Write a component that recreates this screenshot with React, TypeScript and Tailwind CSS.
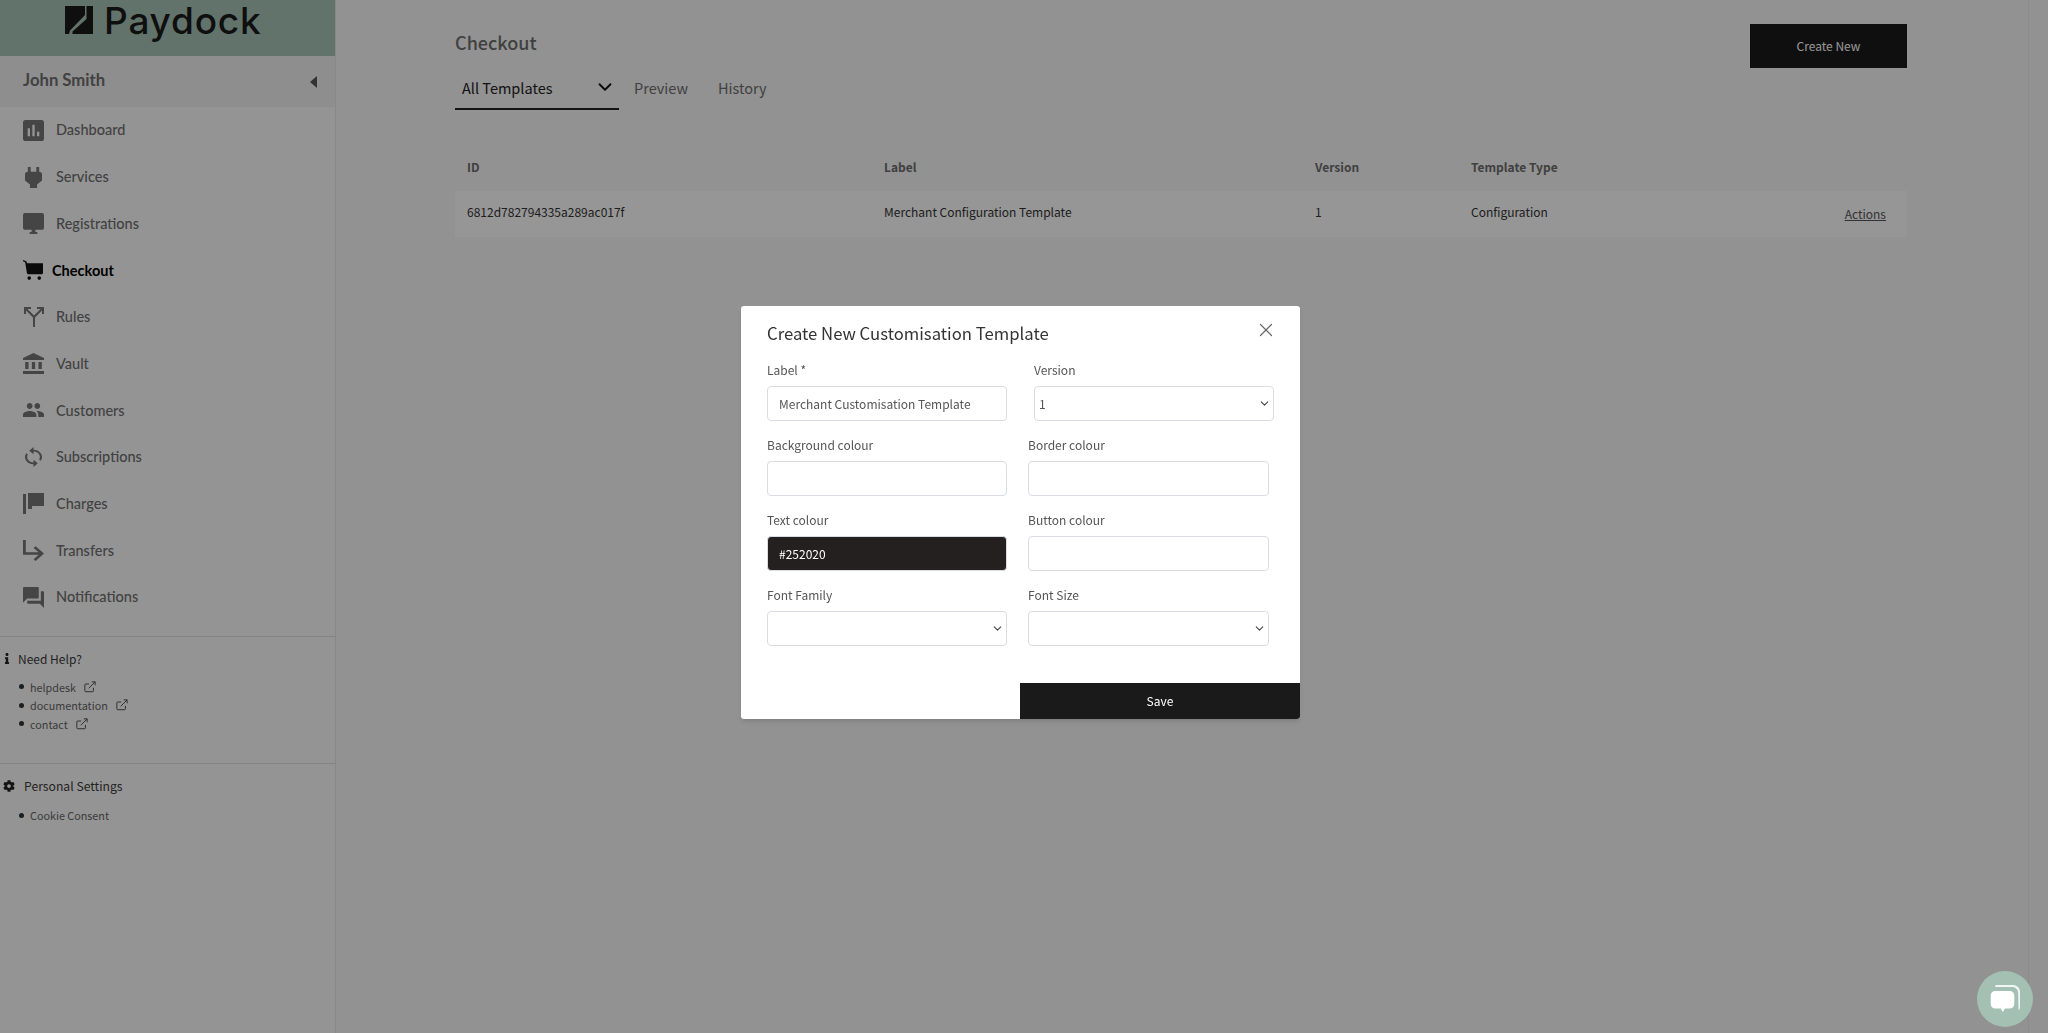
import { X, ChevronDown } from "lucide-react";
import { FaCog, FaInfo } from "react-icons/fa";

// ─── Icons ──────────────────────────────────────────────────

function Glyph({ d, box, className }: { d: string; box: string; className?: string }) {
  return (
    <svg viewBox={box} className={className} fill="currentColor" preserveAspectRatio="none">
      <path d={d} />
    </svg>
  );
}

function Logo() {
  return (
    <div className="flex h-14 items-start bg-[#a6c3b5] pl-[65px]">
      <svg viewBox="0 0 28 28" className="mt-[6px] mr-[11px] h-[28px] w-[28px]" fill="#1a1a1a">
        <path d="M0 0h20v9L5 24.500 4 28H0zM28 0v28H7.500v-2.500L21.500 13V0z" />
      </svg>
      <span className="pt-[1px] font-['Inter',sans-serif] text-[37px] leading-[40px] font-medium tracking-[0.8px] text-[#1a1a1a]">
        Paydock
      </span>
    </div>
  );
}

function ExternalIcon() {
  return (
    <svg viewBox="0 0 14 14" className="ml-[8px] h-[12px] w-[12px] text-[#4a4a4a]" fill="none" stroke="currentColor" strokeWidth="1.1">
      <path d="M11 8v3.500a1 1 0 0 1-1 1H2a1 1 0 0 1-1-1V4.500a1 1 0 0 1 1-1h4" />
      <path d="M5.500 8.500L13 1M9 1h4v4" />
    </svg>
  );
}

// ─── Data ───────────────────────────────────────────────────

const NAV = [
  { label: "Dashboard", box: "3 3 18 18", w: "w-[21px]", h: "h-[21px]", d: "M19 3H5c-1.100 0-2 .9-2 2v14c0 1.100.9 2 2 2h14c1.100 0 2-.9 2-2V5c0-1.100-.9-2-2-2zM9 17H7v-7h2v7zm4 0h-2V7h2v10zm4 0h-2v-4h2v4z" },
  { label: "Services", box: "6 3 12 18", w: "w-[17px]", h: "h-[21px]", d: "M16.010 7L16 3h-2v4h-4V3H8v4h-.01C7 6.990 6 7.990 6 8.990v5.490L9.500 18v3h5v-3l3.500-3.510v-5.500c0-1-1-2-1.990-1.990z" },
  { label: "Registrations", box: "1 2 22 20", w: "w-[21px]", h: "h-[21px]", d: "M21 2H3c-1.100 0-2 .9-2 2v12c0 1.100.9 2 2 2h7v2H8v2h8v-2h-2v-2h7c1.100 0 2-.9 2-2V4c0-1.100-.9-2-2-2z" },
  { label: "Checkout", box: "0 0 24 24", w: "w-[20px]", h: "h-[20px]", active: true, d: "M0 0l4 1.500L5 4h19v11.500c0 1-1 1.500-2 1.500H6.500c-1 0-1.600-.6-1.800-1.500L2.600 2.700 0 1.500zM7.500 19.500a2.200 2.200 0 1 1 0 4.400 2.200 2.200 0 0 1 0-4.400zm12 0a2.200 2.200 0 1 1 0 4.400 2.200 2.200 0 0 1 0-4.400z" },
  { label: "Rules", box: "0 0 20 20", w: "w-[20px]", h: "h-[20px]", d: "M0 0h7v2H3.400L10 8.600 16.600 2H13V0h7v7h-2V3.400l-7 7V20H9v-9.600l-7-7V7H0z" },
  { label: "Vault", box: "2 1 19 21", w: "w-[21px]", h: "h-[21px]", d: "M4 10v7h3v-7H4zm6 0v7h3v-7h-3zM2 22h19v-3H2v3zm14-12v7h3v-7h-3zm-4.500-9L2 6v2h19V6l-9.500-5z" },
  { label: "Customers", box: "1 5 22 14", w: "w-[21px]", h: "h-[14px]", d: "M16 11c1.660 0 2.990-1.340 2.990-3S17.660 5 16 5c-1.660 0-3 1.340-3 3s1.340 3 3 3zm-8 0c1.660 0 2.990-1.340 2.990-3S9.660 5 8 5C6.340 5 5 6.340 5 8s1.340 3 3 3zm0 2c-2.330 0-7 1.170-7 3.500V19h14v-2.500c0-2.330-4.670-3.500-7-3.500zm8 0c-.29 0-.62.02-.97.05 1.160.84 1.970 1.970 1.970 3.450V19h6v-2.500c0-2.330-4.670-3.500-7-3.500z" },
  { label: "Subscriptions", box: "4 1 16 22", w: "w-[17px]", h: "h-[20px]", d: "M12 4V1L8 5l4 4V6c3.310 0 6 2.690 6 6 0 1.010-.25 1.970-.7 2.800l1.460 1.460C19.540 15.030 20 13.570 20 12c0-4.420-3.580-8-8-8zm0 14c-3.310 0-6-2.690-6-6 0-1.010.25-1.970.7-2.800L5.240 7.740C4.460 8.970 4 10.430 4 12c0 4.420 3.580 8 8 8v3l4-4-4-4v3z" },
  { label: "Charges", box: "0 0 21 21", w: "w-[21px]", h: "h-[21px]", d: "M0 1h3v20H0zM5 0h16v13H9v3H5z" },
  { label: "Transfers", box: "4 4 15 17", w: "w-[21px]", h: "h-[21px]", d: "M19 15l-6 6-1.420-1.420L15.170 16H4V4h2v10h9.170l-3.590-3.580L13 9l6 6z" },
  { label: "Notifications", box: "2 2 20 20", w: "w-[21px]", h: "h-[21px]", d: "M21 6h-2v9H6v2c0 .55.45 1 1 1h11l4 4V7c0-.55-.45-1-1-1zm-4 6V3c0-.55-.45-1-1-1H3c-.55 0-1 .45-1 1v14l4-4h10c.55 0 1-.45 1-1z" },
];

const HELP_LINKS = ["helpdesk", "documentation", "contact"];

// ─── Sidebar ────────────────────────────────────────────────

function Sidebar() {
  return (
    <aside className="flex h-full w-[336px] shrink-0 flex-col border-r border-[#e8e8e8] bg-[#fbfbfb] font-['Noto_Sans_CJK_SC',sans-serif]">
      <Logo />
      <div className="flex h-[51px] items-center justify-between bg-[#f2f2f2] pr-[18px] pl-[23px]">
        <span className="-mt-[2px] font-['Lato',sans-serif] text-[16.7px] font-bold text-[#6f6f6f]">John Smith</span>
        <span className="h-0 w-0 border-y-[6px] border-r-[7px] border-y-transparent border-r-[#555]" />
      </div>
      <nav className="flex flex-col">
        {NAV.map((item) => (
          <div
            key={item.label}
            className={`flex h-[46.7px] items-center font-['Lato',sans-serif] text-[14.5px] ${
              item.active ? "pl-[22px] font-bold text-black" : "pl-[23px] font-medium text-[#707070]"
            }`}
          >
            <span className={item.active ? "w-[30px]" : "w-[33px]"}>
              <span className={`flex w-[21px] justify-center ${item.active ? "text-[#111]" : "text-[#757575]"}`}>
                <Glyph d={item.d} box={item.box} className={`${item.w} ${item.h}`} />
              </span>
            </span>
            {item.label}
          </div>
        ))}
      </nav>

      <div className="mt-[15px] border-t border-[#e0e0e0] pt-[12px]">
        <div className="flex h-[20px] items-center text-[12px] text-[#3b3b3b]">
          <FaInfo className="ml-[3px] h-[11px] w-[8px] text-[#222]" />
          <span className="ml-[7px]">Need Help?</span>
        </div>
        <ul className="mt-[9px] mb-[30px] flex flex-col">
          {HELP_LINKS.map((link) => (
            <li key={link} className="flex h-[18.500px] items-center pl-[19px] text-[10.800px] text-[#666]">
              <span className="mr-[6px] h-[5px] w-[5px] rounded-full bg-[#333]" />
              {link}
              <ExternalIcon />
            </li>
          ))}
        </ul>
      </div>

      <div className="border-t border-[#e0e0e0] pt-[12px]">
        <div className="flex h-[20px] items-center text-[12.200px] text-[#3b3b3b]">
          <FaCog className="ml-[3px] h-[12px] w-[12px] text-[#222]" />
          <span className="ml-[9px]">Personal Settings</span>
        </div>
        <div className="mt-[10px] flex h-[18px] items-center pl-[19px] text-[10.800px] text-[#666]">
          <span className="mr-[6px] h-[5px] w-[5px] rounded-full bg-[#333]" />
          Cookie Consent
        </div>
      </div>
    </aside>
  );
}

// ─── Main content ───────────────────────────────────────────

function MainContent() {
  return (
    <main className="min-w-0 flex-1 pt-[24px] pl-[119px] font-['Noto_Sans_CJK_SC',sans-serif]">
      <div className="flex w-[1452px] items-start justify-between">
        <div>
          <h1 className="mt-[3px] text-[18px] leading-[30px] font-medium text-[#6e6e6e]">Checkout</h1>
          <div className="mt-[12px] flex items-start text-[14.500px]">
            <div className="flex h-[41px] w-[164px] items-start justify-between border-b-2 border-[#222] pt-[7px] pr-[3px] pl-[7px] text-[#222]">
              <span className="leading-[24px]">All Templates</span>
              <ChevronDown className="h-[22px] w-[22px] text-[#111]" strokeWidth={2} />
            </div>
            <span className="ml-[15px] pt-[7px] leading-[24px] text-[#6e6e6e]">Preview</span>
            <span className="ml-[30px] pt-[7px] leading-[24px] text-[#6e6e6e]">History</span>
          </div>
        </div>
        <button className="h-[44px] w-[157px] bg-[#1a1a1a] text-[12px] text-white">Create New</button>
      </div>

      <div className="mt-[44px] w-[1452px] text-[12px]">
        <div className="grid h-[37px] grid-cols-[417px_431px_156px_1fr] items-start pt-[1px] pl-[12px] leading-[24px] font-semibold text-[#6e6e6e]">
          <span>ID</span>
          <span>Label</span>
          <span>Version</span>
          <span>Template Type</span>
        </div>
        <div className="relative grid h-[46px] grid-cols-[417px_431px_156px_1fr] items-start bg-white pt-[9px] pl-[12px] leading-[24px] text-[#333]">
          <span>6812d782794335a289ac017f</span>
          <span>Merchant Configuration Template</span>
          <span>1</span>
          <span>Configuration</span>
          <a className="absolute top-[11px] right-[21px] text-[#555] underline">Actions</a>
        </div>
      </div>
    </main>
  );
}

// ─── Modal ──────────────────────────────────────────────────

const inputBase =
  "h-[35px] w-full rounded-[4px] border border-[#d9dde3] bg-white text-[12px] text-[#555] outline-none";

function Field({
  label,
  width,
  children,
}: {
  label: string;
  width: string;
  children: React.ReactNode;
}) {
  return (
    <label className={`flex flex-col ${width}`}>
      <span className="mb-[6px] h-[21px] text-[12px] leading-[21px] text-[#555]">{label}</span>
      {children}
    </label>
  );
}

function Select({ value }: { value?: string }) {
  return (
    <div className="relative">
      <select className={`${inputBase} appearance-none pl-[4px]`} defaultValue={value}>
        {value && <option value={value}>{value}</option>}
      </select>
      <ChevronDown className="pointer-events-none absolute top-[11px] right-[3px] h-[13px] w-[13px] text-[#444]" strokeWidth={2} />
    </div>
  );
}

function CreateModal() {
  return (
    <div className="fixed inset-0 bg-[rgba(0,0,0,0.41)]">
      <div className="mt-[306px] ml-[741px] h-[413px] w-[559px] overflow-hidden rounded-[3px] bg-white font-['Noto_Sans_CJK_SC',sans-serif] shadow-md">
        <div className="relative flex h-[53px] items-start pt-[13px] pl-[26px]">
          <h2 className="text-[16.700px] leading-[28px] text-[#333]">Create New Customisation Template</h2>
          <X className="absolute top-[13px] right-[23px] h-[22px] w-[22px] text-[#666]" strokeWidth={1.3} />
        </div>
        <div className="flex flex-col gap-[13px] px-[26px]">
          <div className="flex gap-[27px]">
            <Field label="Label *" width="w-[240px]">
              <input readOnly value="Merchant Customisation Template" className={`${inputBase} px-[11px]`} />
            </Field>
            <Field label="Version" width="w-[240px]">
              <Select value="1" />
            </Field>
          </div>
          <div className="flex gap-[21px]">
            <Field label="Background colour" width="w-[240px]">
              <input readOnly className={inputBase} />
            </Field>
            <Field label="Border colour" width="w-[241px]">
              <input readOnly className={inputBase} />
            </Field>
          </div>
          <div className="flex gap-[21px]">
            <Field label="Text colour" width="w-[240px]">
              <input
                readOnly
                value="#252020"
                className="h-[35px] rounded-[4px] border border-[#d9dde3] bg-[#252020] px-[11px] text-[12px] text-white outline-none"
              />
            </Field>
            <Field label="Button colour" width="w-[241px]">
              <input readOnly className={inputBase} />
            </Field>
          </div>
          <div className="flex gap-[21px]">
            <Field label="Font Family" width="w-[240px]">
              <Select />
            </Field>
            <Field label="Font Size" width="w-[241px]">
              <Select />
            </Field>
          </div>
        </div>
        <div className="mt-[37px] flex justify-end">
          <button className="h-[36px] w-[280px] bg-[#1a1a1a] text-[12px] text-white">Save</button>
        </div>
      </div>
    </div>
  );
}

// ─── Chat launcher ──────────────────────────────────────────

function ChatButton() {
  return (
    <div className="fixed right-[15px] bottom-[6px] h-[56px] w-[56px] rounded-full bg-[#a3c0b3]">
      <svg viewBox="0 0 56 56" className="h-[56px] w-[56px]" fill="white">
        <path d="M20 14h16c4 0 7 3 7 7v15c0 1.500-.6 2.800-1.500 3.500l-.3-17c0-4-2.500-6.500-6.500-6.500H18c0-1.500 1-2 2-2z" opacity="0.85" />
        <path d="M18.500 20h14c3 0 4.800 1.800 4.800 4.800v8c0 3-1.800 4.800-4.800 4.800H28l-2.200 3.500-2.200-3.500h-5.100c-3 0-4.800-1.800-4.800-4.800v-8c0-3 1.800-4.800 4.800-4.800z" />
      </svg>
    </div>
  );
}

// ─── Page ───────────────────────────────────────────────────

export default function App() {
  return (
    <div className="flex h-screen overflow-hidden bg-[#f8f8f8]">
      <Sidebar />
      <MainContent />
      <div className="w-[20px] shrink-0 border-l border-[#efefef]" />
      <CreateModal />
      <ChatButton />
    </div>
  );
}
